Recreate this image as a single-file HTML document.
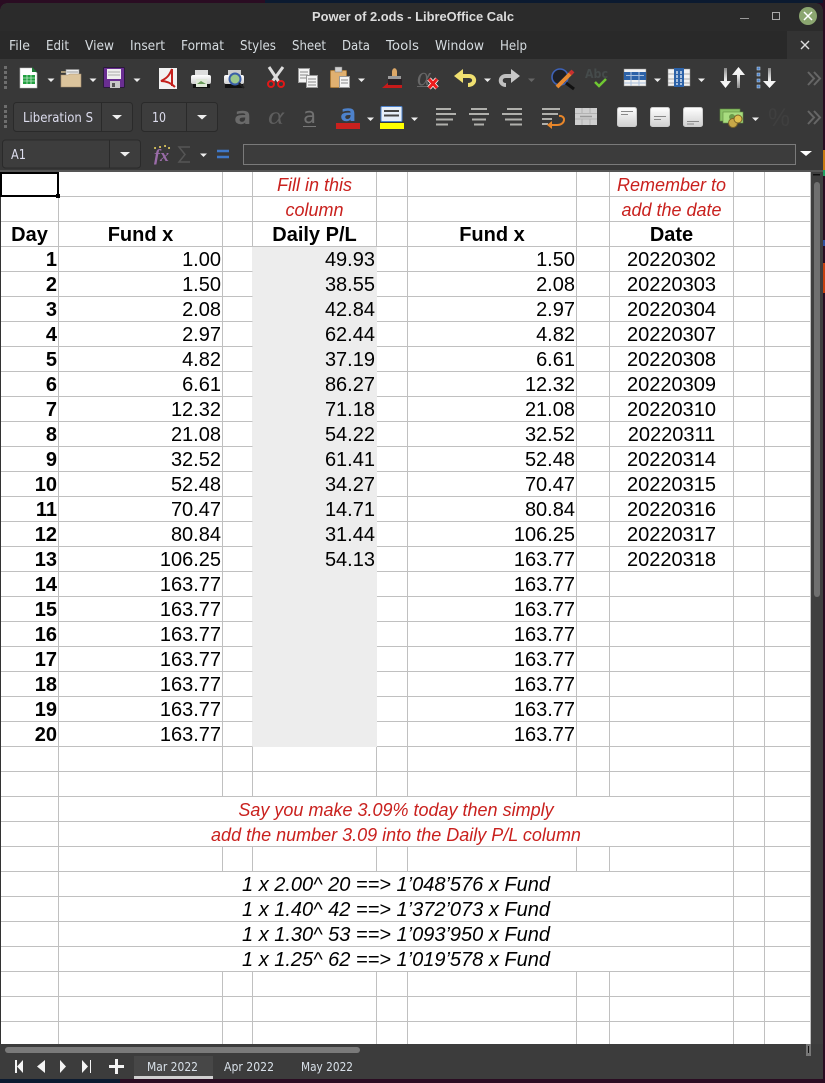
<!DOCTYPE html>
<html><head><meta charset="utf-8"><title>Power of 2.ods - LibreOffice Calc</title>
<style>
html,body{margin:0;padding:0;background:#2a0c22;width:825px;height:1083px;overflow:hidden}
svg{position:absolute;left:0;top:0}
#sheet{position:absolute;left:1px;top:172px;width:810px;height:872px;overflow:hidden;background:#fff}
table{border-collapse:separate;border-spacing:0;table-layout:fixed;width:810px;font:20px/22px "Liberation Sans",sans-serif;color:#000}
td{height:22px;padding:2px 1px 0 0;border-right:1px solid #c0c0c0;border-bottom:1px solid #c0c0c0;text-align:right;white-space:nowrap;overflow:hidden;box-sizing:content-box}
tr{height:25px}
td.b{font-weight:bold}
td.c{text-align:center;padding:2px 0 0}
td.bc{text-align:center;padding:2px 0 0;font-weight:bold}
td.r{text-align:center;padding:2px 0 0;font-style:italic;color:#c9211e;font-size:18px}
td.i{text-align:center;padding:2px 0 0;font-style:italic}
td.l{border-right-color:#ededed}
td.g{background:#ededed;border-right-color:#ededed;border-bottom-color:#ededed}
#cur{position:absolute;left:0;top:172px;width:55px;height:21px;border:2px solid #000;border-left-width:2px}
#hd{position:absolute;left:56px;top:194px;width:4px;height:4px;background:#000}
</style></head><body>
<svg width="825" height="1083" viewBox="0 0 825 1083" font-family="'DejaVu Sans',sans-serif">
<defs>
<linearGradient id="w" x1="0" y1="0" x2="0" y2="1"><stop offset="0" stop-color="#fff"/><stop offset="1" stop-color="#cfcfcf"/></linearGradient>
<linearGradient id="ar" x1="0" y1="0" x2="0" y2="1"><stop offset="0" stop-color="#888"/><stop offset=".6" stop-color="#eee"/><stop offset="1" stop-color="#fff"/></linearGradient>
<linearGradient id="au" x1="0" y1="1" x2="0" y2="0"><stop offset="0" stop-color="#888"/><stop offset=".6" stop-color="#eee"/><stop offset="1" stop-color="#fff"/></linearGradient>
</defs>
<!-- desktop -->
<rect x="0" y="0" width="265" height="3" fill="#2a0c22"/><rect x="265" y="0" width="560" height="3" fill="#0b1a30"/>
<rect x="0" y="1079" width="120" height="4" fill="#0b1a30"/><rect x="120" y="1079" width="48" height="4" fill="#2a0c22"/><rect x="168" y="1079" width="657" height="4" fill="#2a0c22"/>
<rect x="823" y="0" width="2" height="1083" fill="#2a0c22"/>
<rect x="823" y="150" width="2" height="20" fill="#c87a10"/><rect x="823" y="170" width="2" height="6" fill="#1fa060"/><rect x="823" y="240" width="2" height="6" fill="#3050a0"/><rect x="823" y="263" width="2" height="30" fill="#c84010"/>
<!-- window -->
<path d="M0 1079V12Q0 3 9 3H814Q823 3 823 12V1079Z" fill="#3a3a3a"/>
<path d="M0 59V12Q0 3 9 3H814Q823 3 823 12V59Z" fill="#2b2b2b"/>
<rect x="0" y="31" width="787" height="28" fill="#292929"/>
<rect x="787" y="31" width="36" height="28" fill="#333"/>
<rect x="0" y="59" width="823" height="112" fill="#383838"/>
<rect x="0" y="170" width="823" height="2" fill="#555"/>
<rect x="0" y="172" width="1" height="872" fill="#333"/>
<!-- title -->
<text x="312" y="21" font-family="'Liberation Sans',sans-serif" font-weight="bold" font-size="13" fill="#dcdcdc" textLength="202" lengthAdjust="spacingAndGlyphs">Power of 2.ods - LibreOffice Calc</text>
<rect x="740" y="18" width="9" height="1" fill="#999"/>
<rect x="772.500" y="12.500" width="7" height="7" fill="none" stroke="#aaa"/>
<circle cx="808" cy="16" r="9" fill="#8ba670"/>
<path d="M804 12l8 8M812 12l-8 8" stroke="#fff" stroke-width="1.500"/>
<!-- menu -->
<g font-size="13" fill="#d6dce0">
<text x="9" y="50" textLength="21" lengthAdjust="spacingAndGlyphs">File</text>
<text x="46" y="50" textLength="23" lengthAdjust="spacingAndGlyphs">Edit</text>
<text x="85" y="50" textLength="29" lengthAdjust="spacingAndGlyphs">View</text>
<text x="130" y="50" textLength="35" lengthAdjust="spacingAndGlyphs">Insert</text>
<text x="181" y="50" textLength="43" lengthAdjust="spacingAndGlyphs">Format</text>
<text x="240" y="50" textLength="36" lengthAdjust="spacingAndGlyphs">Styles</text>
<text x="292" y="50" textLength="34" lengthAdjust="spacingAndGlyphs">Sheet</text>
<text x="342" y="50" textLength="28" lengthAdjust="spacingAndGlyphs">Data</text>
<text x="386" y="50" textLength="33" lengthAdjust="spacingAndGlyphs">Tools</text>
<text x="435" y="50" textLength="49" lengthAdjust="spacingAndGlyphs">Window</text>
<text x="500" y="50" textLength="27" lengthAdjust="spacingAndGlyphs">Help</text>
</g>
<path d="M801 41l8 8M809 41l-8 8" stroke="#ddd" stroke-width="1.400"/>
<!-- grips -->
<g fill="#6e6e6e">
<rect x="4" y="66" width="3" height="3"/><rect x="4" y="71" width="3" height="3"/><rect x="4" y="76" width="3" height="3"/><rect x="4" y="81" width="3" height="3"/><rect x="4" y="86" width="3" height="3"/>
<rect x="4" y="105" width="3" height="3"/><rect x="4" y="110" width="3" height="3"/><rect x="4" y="115" width="3" height="3"/><rect x="4" y="120" width="3" height="3"/><rect x="4" y="125" width="3" height="3"/>
</g>
<!-- dropdown arrows -->
<g fill="#eee">
<path d="M47.500 78.500h7l-3.500 3.500z"/><path d="M89.500 78.500h7l-3.500 3.500z"/><path d="M133.500 78.500h7l-3.500 3.500z"/><path d="M358 78.500h7l-3.500 3.500z"/><path d="M484 78.500h7l-3.500 3.500z"/><path d="M654 78.500h7l-3.500 3.500z"/><path d="M698 78.500h7l-3.500 3.500z"/>
<path d="M367 117.500h7l-3.500 3.500z"/><path d="M411 117.500h7l-3.500 3.500z"/><path d="M752 117.500h7l-3.500 3.500z"/><path d="M200 153.500h7l-3.500 3.500z"/>
</g>
<path d="M528 78.500h7l-3.500 3.500z" fill="#666"/>
<!-- new -->
<path d="M20 68h12l5 5v15H20z" fill="#fff" stroke="#bbb" stroke-width=".6"/>
<path d="M32 67l5 5h-5z" fill="#1d7a35"/>
<rect x="23" y="75" width="12" height="9" fill="#22a040"/>
<path d="M23 78h12M23 81h12M27 75v9M31 75v9" stroke="#bfe8c8" stroke-width=".8"/>
<!-- open -->
<path d="M61 71h8l2 2h-10z" fill="#a89878"/>
<rect x="66" y="69.500" width="13" height="8" fill="#eee" stroke="#8a8a8a" stroke-width=".6"/>
<path d="M67 72h11" stroke="#999"/>
<path d="M61 75h7l2-1h11v13H61z" fill="#dcc49c" stroke="#a89070" stroke-width=".6"/>
<!-- save -->
<rect x="103.500" y="67.500" width="21" height="20" rx="1" fill="#6a2e92" stroke="#2a1a3a"/>
<rect x="107" y="69" width="14" height="10" fill="#eee"/>
<path d="M108 72h12M108 75h12" stroke="#aaa"/>
<rect x="110" y="81" width="10" height="7" fill="#c8c8c8"/><rect x="112" y="83" width="3" height="4" fill="#555"/>
<!-- pdf -->
<rect x="159" y="68" width="18" height="21" fill="#f2f2f2"/>
<path d="M172 69C169 76 167 78 161 81 166 81 171 83 175 87M172 69V86" fill="none" stroke="#c4201c" stroke-width="2"/>
<!-- print -->
<rect x="195" y="70" width="13" height="6" fill="#ddd"/>
<rect x="191" y="75" width="20" height="9" rx="2" fill="url(#w)"/>
<rect x="193" y="84" width="17" height="4" fill="#111"/>
<rect x="196" y="79" width="11" height="8" fill="#dfe8d8"/><path d="M197 84l4-3 5 3z" fill="#6a9a5a"/>
<!-- preview -->
<rect x="228" y="70" width="13" height="5" fill="#ccc"/>
<rect x="224" y="75" width="20" height="9" rx="2" fill="url(#w)"/>
<rect x="225" y="84" width="18" height="4" fill="#111"/>
<circle cx="235" cy="79" r="5.500" fill="#9cc88c" stroke="#3a5fa8" stroke-width="2"/>
<path d="M239 83l5 5" stroke="#222" stroke-width="2"/>
<!-- cut -->
<path d="M269 67l10 15M283 67l-11 15" stroke="#ddd" stroke-width="3"/>
<circle cx="271" cy="84" r="3" fill="none" stroke="#e01818" stroke-width="2"/><circle cx="281" cy="84" r="3" fill="none" stroke="#e01818" stroke-width="2"/>
<!-- copy -->
<rect x="298.500" y="68.500" width="11" height="14" fill="#f4f4f4" stroke="#999"/>
<path d="M300 72h8M300 75h8M300 78h8" stroke="#888"/>
<rect x="306.500" y="75.500" width="11" height="12" fill="#f4f4f4" stroke="#999"/>
<path d="M308 79h8M308 82h8M308 85h8" stroke="#888"/>
<!-- paste -->
<rect x="330.500" y="70.500" width="16" height="17" rx="1" fill="#e0b070" stroke="#a87a3a"/>
<rect x="335" y="67" width="7" height="5" fill="#d0d0d0" stroke="#777" stroke-width=".5"/>
<rect x="339.500" y="76.500" width="10" height="11" fill="#f4f4f4" stroke="#999"/>
<path d="M341 80h7M341 83h7" stroke="#888"/>
<!-- brush -->
<path d="M382 88l8-7h12v7z" fill="#c81a1a"/>
<rect x="388" y="79" width="14" height="6" fill="#2a2226"/>
<rect x="388" y="76" width="13" height="3" fill="#9a9a9a"/>
<path d="M392 76v-4c0-5 5-5 5 0v4z" fill="#dca868"/>
<!-- clear formatting -->
<text x="417" y="85" font-family="'Liberation Serif',serif" font-style="italic" font-size="26" fill="#666">α</text>
<path d="M417 86.500h11" stroke="#666"/>
<path d="M429 79l8 9M437 79l-8 9" stroke="#fff" stroke-width="4.500"/>
<path d="M429 79l8 9M437 79l-8 9" stroke="#ee1c1c" stroke-width="3"/>
<!-- undo / redo -->
<path d="M460 76h9c7 0 7 9-1 9" fill="none" stroke="#f0e070" stroke-width="4"/>
<path d="M454 76l9-7v14z" fill="#f0e070"/>
<path d="M514 76h-8c-7 0-7 9 0 9" fill="none" stroke="#c0c0c0" stroke-width="4"/>
<path d="M520 76l-9-7v14z" fill="#c8c8c8"/>
<!-- find -->
<circle cx="560" cy="77" r="8" fill="#1e2026" stroke="#3d62b8" stroke-width="1.600"/>
<path d="M566 83l8 6" stroke="#111" stroke-width="3"/>
<path d="M557 87l15-15" stroke="#e88a30" stroke-width="4"/>
<path d="M570 74l3-3" stroke="#c83030" stroke-width="4"/>
<!-- spell -->
<text x="585" y="78" font-weight="bold" font-size="12" fill="#454b4b" textLength="23" lengthAdjust="spacingAndGlyphs">Abc</text>
<path d="M595 82l4 4 7-7" fill="none" stroke="#70c832" stroke-width="2.500"/>
<!-- table row -->
<rect x="624" y="69" width="22" height="17" fill="#f2f2f2" stroke="#888" stroke-width=".5"/>
<rect x="624" y="72" width="22" height="8" fill="#2c62a8"/>
<path d="M626 75.500h18M631 72v14M639 72v14M624 83h22" stroke="#a8bfdc"/>
<!-- col -->
<rect x="668" y="69" width="22" height="17" fill="#f2f2f2" stroke="#888" stroke-width=".5"/>
<path d="M668 74h22M668 79h22M668 83h22" stroke="#aaa"/>
<rect x="674" y="68" width="10" height="19" fill="#2c62a8"/>
<path d="M677 71v14M681 71v14" stroke="#a8bfdc" stroke-dasharray="3 1" stroke-width="2"/>
<!-- sort -->
<path d="M724 68h3v13h4l-5.500 7-5.500-7h4z" fill="url(#ar)"/>
<path d="M737 88h3V75h5l-6.500-8-6.500 8h5z" fill="url(#au)"/>
<!-- filter -->
<g fill="#4a80c8" stroke="#cde" stroke-width=".5"><rect x="757" y="67" width="3" height="3"/><rect x="757" y="73" width="3" height="3"/><rect x="757" y="79" width="3" height="3"/><rect x="757" y="85" width="3" height="3"/></g>
<path d="M768 68h3v13h5l-6.500 7-6.500-7h5z" fill="url(#ar)"/>
<!-- chevrons -->
<path d="M808 72l6 6.500-6 6.500M814 72l6 6.500-6 6.500M808 111l6 6.500-6 6.500M814 111l6 6.500-6 6.500" fill="none" stroke="#666" stroke-width="2"/>
<!-- font box -->
<g fill="#3d3d3d" stroke="#2a2a2a"><rect x="13.500" y="102.500" width="119" height="29" rx="3"/><rect x="141.500" y="102.500" width="76" height="29" rx="3"/><rect x="2.500" y="140" width="138" height="28" rx="3"/></g>
<path d="M101.500 103v28M186.500 103v28M109.500 140v28" stroke="#2a2a2a"/>
<path d="M112 115h10l-5 4.500zM197 115h10l-5 4.500zM120 152h10l-5 4.500z" fill="#eee"/>
<text x="23" y="122" font-size="13" fill="#dde" textLength="70" lengthAdjust="spacingAndGlyphs">Liberation S</text>
<text x="152" y="122" font-size="13" fill="#dde" textLength="14" lengthAdjust="spacingAndGlyphs">10</text>
<text x="11" y="159" font-size="13" fill="#dde" textLength="15" lengthAdjust="spacingAndGlyphs">A1</text>
<!-- a icons -->
<text x="234" y="124" font-family="'DejaVu Sans Mono',monospace" font-weight="bold" font-size="24" fill="#6a6a6a" textLength="17" lengthAdjust="spacingAndGlyphs">a</text>
<text x="268" y="124" font-family="'Liberation Serif',serif" font-style="italic" font-size="25" fill="#5e5e5e" textLength="16" lengthAdjust="spacingAndGlyphs">α</text>
<text x="303" y="123" font-family="'DejaVu Sans Mono',monospace" font-size="22" fill="#707070" textLength="13" lengthAdjust="spacingAndGlyphs">a</text>
<path d="M303 126.500h13" stroke="#777"/>
<text x="340" y="121" font-family="'DejaVu Sans Mono',monospace" font-weight="bold" font-size="23" fill="#4d82cc" textLength="16" lengthAdjust="spacingAndGlyphs">a</text>
<rect x="336" y="123" width="24" height="6" fill="#c9211e"/>
<rect x="381" y="106.500" width="21" height="15" rx="1" fill="#e6eef8" stroke="#4d82cc"/>
<path d="M384 111h15M384 115.500h15" stroke="#444" stroke-width="2"/>
<rect x="380" y="123" width="24" height="6" fill="#ffff00"/>
<!-- aligns -->
<g fill="none" stroke="#b0b0ac" stroke-width="2">
<path d="M436 109h15M436 114h20M436 119.500h17M436 124.500h12"/>
<path d="M471 109h16M469 114h20M472 119.500h14M474 124.500h10"/>
<path d="M507 109h15M502 114h20M505 119.500h17M510 124.500h12"/>
<path d="M542 109h18M542 114h16M542 119h10M542 124h6"/>
</g>
<path d="M559 116c7-1 7 9-2 9h-5" fill="none" stroke="#e8862a" stroke-width="2"/>
<path d="M552 121v8l-5-4z" fill="#e8862a"/>
<rect x="575" y="108" width="22" height="17" fill="#cfcfcf"/>
<path d="M575 113.500h22M575 119h22M582 108v5M590 108v5M582 119v6M590 119v6" stroke="#aaa" stroke-width=".8"/>
<path d="M580 116.500h12" stroke="#999" stroke-width="1.500"/>
<!-- valign -->
<g fill="url(#w)" stroke="#ccc"><rect x="617.500" y="107.500" width="19" height="19" rx="2"/><rect x="650.500" y="107.500" width="19" height="19" rx="2"/><rect x="683.500" y="107.500" width="19" height="19" rx="2"/></g>
<path d="M621 111.500h12M621 114.500h7M654 116.500h12M654 119.500h7M687 121.500h12M687 124h7" stroke="#888"/>
<!-- currency -->
<rect x="720" y="109" width="20" height="12" fill="#8cc468" stroke="#5e8a3e" stroke-width=".6"/>
<rect x="723" y="112" width="20" height="11" fill="#a8dc80" stroke="#5e8a3e" stroke-width=".6"/>
<circle cx="732" cy="117" r="3" fill="#6a9a4a"/>
<circle cx="733" cy="123" r="4.500" fill="#c8a848" stroke="#7a6428"/>
<circle cx="738" cy="119" r="4" fill="#e0c050" stroke="#7a6428"/>
<!-- percent -->
<text x="768" y="126" font-family="'Liberation Sans',sans-serif" font-size="25" fill="#3f3f3f" textLength="22" lengthAdjust="spacingAndGlyphs">%</text>
<!-- formula -->
<text x="154" y="161" font-family="'Liberation Serif',serif" font-style="italic" font-weight="bold" font-size="17" fill="#9a6ca8" textLength="15" lengthAdjust="spacingAndGlyphs">fx</text>
<path d="M155 148h.1M160 147h.1M165 146h.1M169 148h.1" stroke="#e8d060" stroke-width="2" stroke-linecap="round"/>
<path d="M190 147h-11l6 7.500-6 7.500h11" fill="none" stroke="#555" stroke-width="1.500"/>
<path d="M217 151h12M217 157h12" stroke="#3f78c8" stroke-width="2.500"/>
<rect x="243.500" y="144.500" width="552" height="20" fill="#3c3c3c" stroke="#7a7a7a"/>
<path d="M800 151h12l-6 5z" fill="#fff"/>
<!-- v scroll -->
<rect x="811" y="172" width="12" height="872" fill="#3f3f3f"/>
<rect x="813" y="174" width="7" height="1.500" fill="#111"/>
<rect x="814" y="182" width="6" height="415" rx="3" fill="#6f6f6f"/>
<!-- bottom -->
<rect x="0" y="1044" width="823" height="35" fill="#3c3c3c"/>
<rect x="5" y="1047" width="355" height="6" rx="3" fill="#7a7a7a"/>
<rect x="806" y="1044" width="5" height="12" fill="#777"/><rect x="808" y="1046" width="1" height="7" fill="#111"/>
<rect x="134" y="1056" width="79" height="23" fill="#474747"/>
<rect x="134" y="1076" width="79" height="3" fill="#d0d0d0"/>
<g fill="#f4f4f4">
<path d="M15 1060h2v13h-2zM23 1060v13l-6-6.500z"/>
<path d="M45 1060v13l-8-6.500z"/>
<path d="M60 1060v13l6-6.500z"/>
<path d="M82 1060v13l6-6.500zM90 1060h1v13h-1z"/>
<path d="M115 1059h3v6h6v3h-6v6h-3v-6h-6v-3h6z"/>
</g>
<g font-size="12" fill="#d8e0e8">
<text x="147" y="1071" textLength="51" lengthAdjust="spacingAndGlyphs">Mar 2022</text>
<text x="224" y="1071" textLength="50" lengthAdjust="spacingAndGlyphs">Apr 2022</text>
<text x="301" y="1071" textLength="52" lengthAdjust="spacingAndGlyphs">May 2022</text>
</g>
</svg>
<div id="sheet"><table>
<colgroup><col style="width:58px"><col style="width:164px"><col style="width:30px"><col style="width:124px"><col style="width:31px"><col style="width:169px"><col style="width:33px"><col style="width:124px"><col style="width:31px"><col style="width:46px"></colgroup>
<tr><td><td><td><td class=r>Fill in this<td><td><td><td class=r>Remember to<td><td></tr>
<tr><td><td><td><td class=r>column<td><td><td><td class=r>add the date<td><td></tr>
<tr><td class=bc>Day<td class=bc>Fund x<td><td class=bc>Daily P/L<td><td class=bc>Fund x<td><td class=bc>Date<td><td></tr>
<tr><td class=b>1<td>1.00<td class=l><td class=g>49.93<td><td>1.50<td><td class=c>20220302<td><td></tr>
<tr><td class=b>2<td>1.50<td class=l><td class=g>38.55<td><td>2.08<td><td class=c>20220303<td><td></tr>
<tr><td class=b>3<td>2.08<td class=l><td class=g>42.84<td><td>2.97<td><td class=c>20220304<td><td></tr>
<tr><td class=b>4<td>2.97<td class=l><td class=g>62.44<td><td>4.82<td><td class=c>20220307<td><td></tr>
<tr><td class=b>5<td>4.82<td class=l><td class=g>37.19<td><td>6.61<td><td class=c>20220308<td><td></tr>
<tr><td class=b>6<td>6.61<td class=l><td class=g>86.27<td><td>12.32<td><td class=c>20220309<td><td></tr>
<tr><td class=b>7<td>12.32<td class=l><td class=g>71.18<td><td>21.08<td><td class=c>20220310<td><td></tr>
<tr><td class=b>8<td>21.08<td class=l><td class=g>54.22<td><td>32.52<td><td class=c>20220311<td><td></tr>
<tr><td class=b>9<td>32.52<td class=l><td class=g>61.41<td><td>52.48<td><td class=c>20220314<td><td></tr>
<tr><td class=b>10<td>52.48<td class=l><td class=g>34.27<td><td>70.47<td><td class=c>20220315<td><td></tr>
<tr><td class=b>11<td>70.47<td class=l><td class=g>14.71<td><td>80.84<td><td class=c>20220316<td><td></tr>
<tr><td class=b>12<td>80.84<td class=l><td class=g>31.44<td><td>106.25<td><td class=c>20220317<td><td></tr>
<tr><td class=b>13<td>106.25<td class=l><td class=g>54.13<td><td>163.77<td><td class=c>20220318<td><td></tr>
<tr><td class=b>14<td>163.77<td class=l><td class=g><td><td>163.77<td><td><td><td></tr>
<tr><td class=b>15<td>163.77<td class=l><td class=g><td><td>163.77<td><td><td><td></tr>
<tr><td class=b>16<td>163.77<td class=l><td class=g><td><td>163.77<td><td><td><td></tr>
<tr><td class=b>17<td>163.77<td class=l><td class=g><td><td>163.77<td><td><td><td></tr>
<tr><td class=b>18<td>163.77<td class=l><td class=g><td><td>163.77<td><td><td><td></tr>
<tr><td class=b>19<td>163.77<td class=l><td class=g><td><td>163.77<td><td><td><td></tr>
<tr><td class=b>20<td>163.77<td class=l><td class=g><td><td>163.77<td><td><td><td></tr>
<tr><td><td><td><td><td><td><td><td><td><td></tr>
<tr><td><td><td><td><td><td><td><td><td><td></tr>
<tr><td><td colspan=7 class=r>Say you make 3.09% today then simply<td><td></tr>
<tr><td><td colspan=7 class=r>add the number 3.09 into the Daily P/L column<td><td></tr>
<tr><td><td><td><td><td><td><td><td><td><td></tr>
<tr><td><td colspan=7 class=i>1 x 2.00^ 20 ==&gt; 1’048’576 x Fund<td><td></tr>
<tr><td><td colspan=7 class=i>1 x 1.40^ 42 ==&gt; 1’372’073 x Fund<td><td></tr>
<tr><td><td colspan=7 class=i>1 x 1.30^ 53 ==&gt; 1’093’950 x Fund<td><td></tr>
<tr><td><td colspan=7 class=i>1 x 1.25^ 62 ==&gt; 1’019’578 x Fund<td><td></tr>
<tr><td><td><td><td><td><td><td><td><td><td></tr>
<tr><td><td><td><td><td><td><td><td><td><td></tr>
<tr><td><td><td><td><td><td><td><td><td><td></tr>
</table></div>
<div id="cur"></div><div id="hd"></div>
</body></html>
